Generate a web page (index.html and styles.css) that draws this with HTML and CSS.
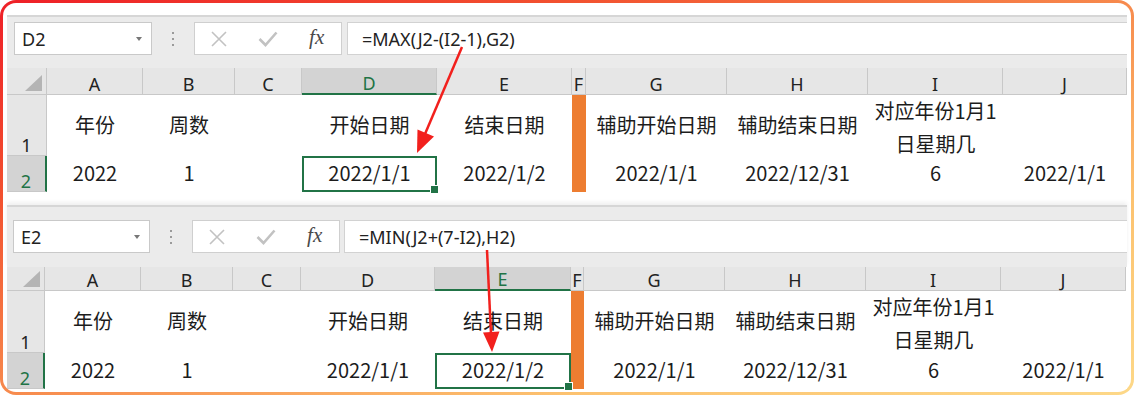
FILE: index.html
```html
<!DOCTYPE html>
<html lang="zh-CN">
<head>
    <meta charset="UTF-8">
    <meta name="viewport" content="width=device-width, initial-scale=1.0">
    <title>开始日期 / 结束日期公式</title>
    <link rel="stylesheet" href="styles.css">
</head>
<body>
<div class="frame">

    <!-- D2: start date -->
    <div class="sheet sheet-top">
        <div class="bar">
            <div class="namebox"><span>D2</span><i class="caret"></i></div>
            <div class="bar-sep"><i></i><i></i><i></i></div>
            <div class="fx-group">
                <span class="fx-btn">
                    <svg width="18" height="18" viewBox="0 0 18 18"><path d="M2 2L16 16M16 2L2 16" stroke="#c2c2c2" stroke-width="1.6" fill="none"/></svg>
                </span>
                <span class="fx-btn">
                    <svg width="20" height="16" viewBox="0 0 20 16"><path d="M1.5 8L7.5 14L18.5 1.5" stroke="#c2c2c2" stroke-width="2.6" fill="none"/></svg>
                </span>
                <span class="fx-btn fx-label">fx</span>
            </div>
            <div class="formula">=MAX(J2-(I2-1),G2)</div>
        </div>
        <div class="grid">
            <div class="corner"></div>
            <div class="col-head">A</div>
            <div class="col-head">B</div>
            <div class="col-head">C</div>
            <div class="col-head is-active">D</div>
            <div class="col-head">E</div>
            <div class="col-head">F</div>
            <div class="col-head">G</div>
            <div class="col-head">H</div>
            <div class="col-head">I</div>
            <div class="col-head">J</div>

            <div class="row-head">1</div>
            <div class="cell">年份</div>
            <div class="cell">周数</div>
            <div class="cell"></div>
            <div class="cell">开始日期</div>
            <div class="cell">结束日期</div>
            <div class="cell is-fill"></div>
            <div class="cell">辅助开始日期</div>
            <div class="cell">辅助结束日期</div>
            <div class="cell two-line"><span>对应年份1月1</span><span>日星期几</span></div>
            <div class="cell"></div>

            <div class="row-head is-active">2</div>
            <div class="cell">2022</div>
            <div class="cell">1</div>
            <div class="cell"></div>
            <div class="cell is-selected">2022/1/1</div>
            <div class="cell">2022/1/2</div>
            <div class="cell is-fill"></div>
            <div class="cell">2022/1/1</div>
            <div class="cell">2022/12/31</div>
            <div class="cell">6</div>
            <div class="cell">2022/1/1</div>
        </div>
    </div>

    <!-- E2: end date -->
    <div class="sheet sheet-bottom">
        <div class="bar">
            <div class="namebox"><span>E2</span><i class="caret"></i></div>
            <div class="bar-sep"><i></i><i></i><i></i></div>
            <div class="fx-group">
                <span class="fx-btn">
                    <svg width="18" height="18" viewBox="0 0 18 18"><path d="M2 2L16 16M16 2L2 16" stroke="#c2c2c2" stroke-width="1.6" fill="none"/></svg>
                </span>
                <span class="fx-btn">
                    <svg width="20" height="16" viewBox="0 0 20 16"><path d="M1.5 8L7.5 14L18.5 1.5" stroke="#c2c2c2" stroke-width="2.6" fill="none"/></svg>
                </span>
                <span class="fx-btn fx-label">fx</span>
            </div>
            <div class="formula">=MIN(J2+(7-I2),H2)</div>
        </div>
        <div class="grid">
            <div class="corner"></div>
            <div class="col-head">A</div>
            <div class="col-head">B</div>
            <div class="col-head">C</div>
            <div class="col-head">D</div>
            <div class="col-head is-active">E</div>
            <div class="col-head">F</div>
            <div class="col-head">G</div>
            <div class="col-head">H</div>
            <div class="col-head">I</div>
            <div class="col-head">J</div>

            <div class="row-head">1</div>
            <div class="cell">年份</div>
            <div class="cell">周数</div>
            <div class="cell"></div>
            <div class="cell">开始日期</div>
            <div class="cell">结束日期</div>
            <div class="cell is-fill"></div>
            <div class="cell">辅助开始日期</div>
            <div class="cell">辅助结束日期</div>
            <div class="cell two-line"><span>对应年份1月1</span><span>日星期几</span></div>
            <div class="cell"></div>

            <div class="row-head is-active">2</div>
            <div class="cell">2022</div>
            <div class="cell">1</div>
            <div class="cell"></div>
            <div class="cell">2022/1/1</div>
            <div class="cell is-selected">2022/1/2</div>
            <div class="cell is-fill"></div>
            <div class="cell">2022/1/1</div>
            <div class="cell">2022/12/31</div>
            <div class="cell">6</div>
            <div class="cell">2022/1/1</div>
        </div>
    </div>

    <svg class="arrows" width="1134" height="395" viewBox="0 0 1134 395">
        <line x1="462" y1="47" x2="425" y2="134" stroke="#f2201d" stroke-width="2.5"/>
        <polygon points="417,153 434,136.5 417.5,129.5" fill="#f2201d"/>
        <line x1="487" y1="250" x2="491" y2="334" stroke="#f2201d" stroke-width="2.5"/>
        <polygon points="492,352 499.5,331.5 483,332.5" fill="#f2201d"/>
    </svg>
</div>
</body>
</html>
```

FILE: styles.css
```css
* {
  box-sizing: border-box;
}

body {
  margin: 0;
  background: #fff;
}

.frame {
  position: relative;
  width: 1134px;
  height: 395px;
  padding: 12px 4px 0 4px;
  border: 3px solid transparent;
  border-radius: 16px;
  background: linear-gradient(#fff, #fff) padding-box,
    linear-gradient(to bottom right, #ee1f27 0%, #f2512f 25%, #f78a4d 50%, #fcc270 75%, #fdd888 100%) border-box;
  overflow: hidden;
}

.sheet {
  background: #fff;
}

.sheet-bottom {
  margin-top: 13px;
}

/* formula bar */
.bar {
  display: flex;
  align-items: flex-start;
  background: #ebebeb;
  border-top: 2px solid #d6d6d6;
  font-family: "Noto Sans", sans-serif;
  font-size: 18px;
  color: #222;
}

.sheet-top .bar {
  height: 53px;
  padding: 5px 0 0 7px;
}

.sheet-bottom .bar {
  height: 62px;
  padding: 13px 0 0 6px;
  box-shadow: 0 -3px 4px rgba(0, 0, 0, 0.06);
}

.namebox {
  display: flex;
  align-items: center;
  width: 138px;
  height: 33px;
  padding-left: 7px;
  background: #fff;
  border: 1px solid #c9c9c9;
}

.sheet-bottom .namebox {
  width: 137px;
}

.caret {
  margin-left: auto;
  margin-right: 9px;
  border-left: 3px solid transparent;
  border-right: 3px solid transparent;
  border-top: 4px solid #777;
}

.bar-sep {
  display: flex;
  flex-direction: column;
  align-items: center;
  justify-content: center;
  gap: 4px;
  width: 42px;
  height: 33px;
}

.bar-sep i {
  width: 2px;
  height: 2px;
  background: #9a9a9a;
}

.fx-group {
  display: flex;
  width: 148px;
  height: 33px;
  background: #fff;
  border: 1px solid #cfcfcf;
}

.fx-btn {
  display: flex;
  align-items: center;
  justify-content: center;
  flex: 1;
}

.fx-label {
  font-family: "Liberation Serif", serif;
  font-style: italic;
  font-size: 21px;
  color: #4a4a4a;
  padding-bottom: 2px;
}

.formula {
  flex: 1;
  display: flex;
  align-items: center;
  height: 33px;
  margin-left: 5px;
  padding-left: 14px;
  background: #fff;
  border: 1px solid #d2d2d2;
  border-right: none;
}

.sheet-bottom .formula {
  margin-left: 4px;
}

/* grid */
.grid {
  display: grid;
}

.sheet-top .grid {
  grid-template-columns: 40px 96px 92px 67px 135px 135px 14px 141px 141px 135px 124px;
  grid-template-rows: 27px 61px 36px;
}

.sheet-bottom .grid {
  grid-template-columns: 38px 96px 92px 68px 134px 136px 13px 141px 141px 135px 125px;
  grid-template-rows: 24px 62px 36px;
}

.corner,
.col-head,
.row-head {
  background: #e6e6e6;
  border-right: 1px solid #c8c8c8;
  border-bottom: 1px solid #c8c8c8;
  font-family: "Noto Sans", sans-serif;
  font-size: 18px;
  line-height: 20px;
  color: #222;
  display: flex;
  align-items: flex-end;
  justify-content: center;
}

.corner {
  position: relative;
}

.corner::after {
  content: "";
  position: absolute;
  right: 4px;
  bottom: 3px;
  width: 17px;
  height: 16px;
  background: #b4b4b4;
  clip-path: polygon(100% 0, 100% 100%, 0 100%);
}

.col-head.is-active {
  background: #d3d3d3;
  color: #217346;
  border-bottom: 2px solid #217346;
}

.row-head.is-active {
  background: #d3d3d3;
  color: #217346;
  border-right: 2px solid #217346;
}

.cell {
  display: flex;
  align-items: center;
  justify-content: center;
  padding-bottom: 3px;
  white-space: nowrap;
  font-family: "Noto Sans CJK SC", "Noto Sans", sans-serif;
  font-size: 20px;
  color: #1c1c1c;
}

.cell.two-line {
  flex-direction: column;
  justify-content: flex-start;
  gap: 4px;
  padding: 1px 0 0;
  line-height: 29px;
}

.cell.is-fill {
  background: #ed7d31;
}

.cell.is-selected {
  position: relative;
  outline: 2px solid #217346;
  outline-offset: -2px;
}

.cell.is-selected::after {
  content: "";
  position: absolute;
  right: -2px;
  bottom: -2px;
  width: 7px;
  height: 7px;
  background: #217346;
  border: 1px solid #fff;
}

.arrows {
  position: absolute;
  top: -3px;
  left: -3px;
  pointer-events: none;
}
```
